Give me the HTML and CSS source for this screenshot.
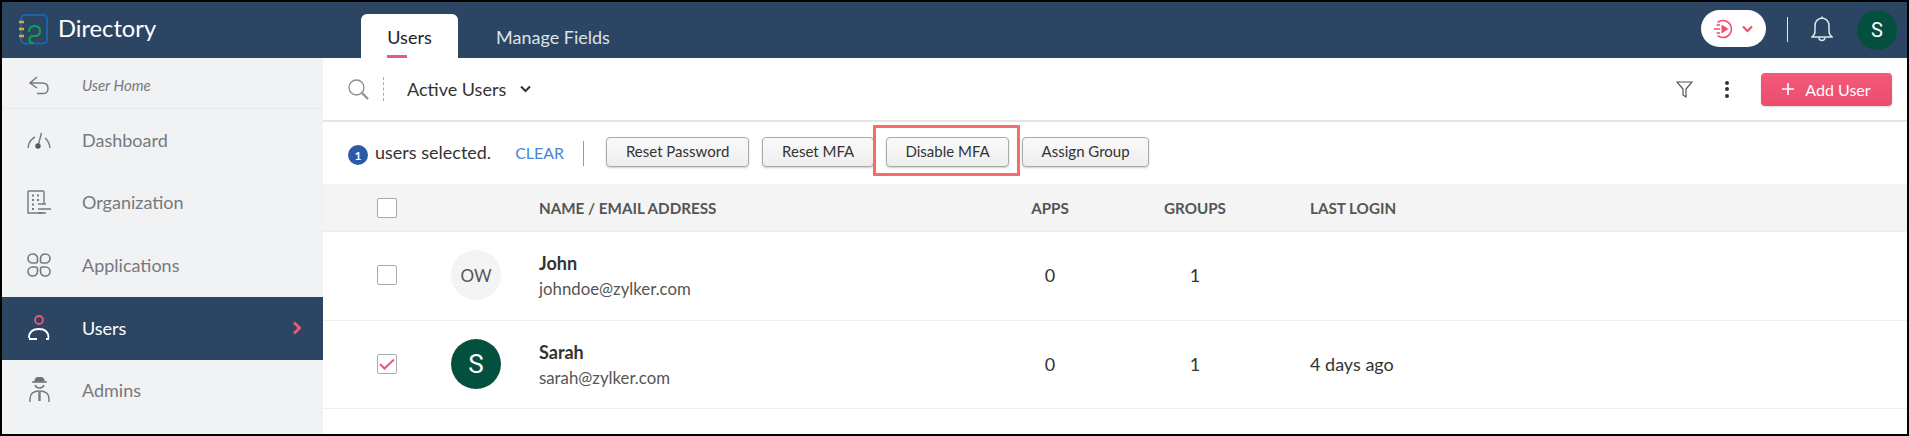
FILE: index.html
```html
<!DOCTYPE html>
<html lang="en">
<head>
  <meta charset="UTF-8" />
  <title>Directory</title>
  <link rel="stylesheet" href="styles.css">
</head>
<body>
  <div class="frame">
    <div class="navbar">
      <div class="brand">
        <svg class="brand-logo" width="29" height="32" viewBox="0 0 29 32" fill="none">
          <rect x="2" y="2" width="26" height="28.500" rx="4" stroke="#1f64a8" stroke-width="2"/>
          <path d="M0 9h5M0 16h5M0 23h5" stroke="#e0a82e" stroke-width="2.400"/>
          <path d="M10 19q0-6 5.500-6t5.500 5q0 5-5 5h-2q-3.500 0-3.500 3.500t4 3.500" stroke="#12a150" stroke-width="2"/>
        </svg>
        <span class="brand-name">Directory</span>
      </div>
      <div class="tabs">
        <div class="tab active">Users</div>
        <div class="tab">Manage Fields</div>
      </div>
      <div class="nav-right">
        <div class="whats-new">
          <svg width="19" height="20" viewBox="0 0 19 20" fill="none" stroke="#ef4f6f" stroke-width="1.600">
            <path d="M3.500 3.500a8.500 8.500 0 1 1 0 13"/>
            <path d="M7.500 5.500v9l7-4.500z" fill="#ef4f6f" stroke="none"/>
            <path d="M2.500 6h3.500M0 10h6M2.500 14h3.500"/>
          </svg>
          <svg width="11" height="8" viewBox="0 0 11 8" fill="none" stroke="#ef4f6f" stroke-width="2.200"><path d="M1 1.500l4.500 4.500 4.500-4.500"/></svg>
        </div>
        <div class="nav-sep"></div>
        <svg class="bell" width="22" height="27" viewBox="0 0 22 27" fill="none" stroke="#dfe6ee" stroke-width="1.500">
          <path d="M1 21q3-2 3-6v-5q0-7 7-8 7 1 7 8v5q0 4 3 6z"/>
          <path d="M8 21.500a3 3 0 0 0 6 0"/>
          <path d="M11 0.500v2"/>
        </svg>
        <div class="avatar avatar-small">S</div>
      </div>
    </div>

    <div class="content">
      <div class="sidebar">
        <div class="side-item home">
          <svg width="22" height="22" viewBox="0 0 22 22" fill="none" stroke="#77797d" stroke-width="1.500"><path d="M9 5L2 11l7 5M2 11h12q6 0 6 5.500t-6 5h-5" transform="translate(0 -2)"/></svg>
          <span>User Home</span>
        </div>
        <div class="side-item">
          <svg width="24" height="18" viewBox="0 0 24 18" fill="none" stroke="#77797d" stroke-width="1.400"><path d="M1 17q1-8 7-11M18 7q4 3 5 10"/><path d="M11.500 13l3-11"/><circle cx="11" cy="15" r="2.700" fill="#55585c" stroke="none"/></svg>
          <span>Dashboard</span>
        </div>
        <div class="side-item">
          <svg width="24" height="24" viewBox="0 0 24 24" fill="none" stroke="#77797d" stroke-width="1.400"><path d="M16 23H1V2q0-1 1-1h14q1 0 1 1v12"/><path d="M5 5.500h2M10 5.500h2M5 10h2M10 10h2M5 14.500h2M5 19h2" stroke-width="2"/><path d="M11 14h8M11 19h13M11 23h8" stroke-width="1.500"/></svg>
          <span>Organization</span>
        </div>
        <div class="side-item">
          <svg width="24" height="24" viewBox="0 0 24 24" fill="none" stroke="#77797d" stroke-width="1.600">
            <path id="petal" d="M5.500 1a4.500 4.500 0 0 0 0 9h3a2 2 0 0 0 2-2V5.500A4.500 4.500 0 0 0 5.500 1z"/>
            <use href="#petal" transform="matrix(-1 0 0 1 24 0)"/>
            <use href="#petal" transform="matrix(1 0 0 -1 0 24)"/>
            <use href="#petal" transform="matrix(-1 0 0 -1 24 24)"/>
          </svg>
          <span>Applications</span>
        </div>
        <div class="side-item active">
          <svg width="24" height="26" viewBox="0 0 24 26" fill="none" stroke-width="1.800"><circle cx="12" cy="5" r="4" stroke="#f0567a"/><path d="M2 23q0-9 10-9 9.500 0 9.500 9" stroke="#fff"/><path d="M2 24h8M19 24h3" stroke="#fff"/></svg>
          <span>Users</span>
          <svg class="side-arrow" width="11" height="14" viewBox="0 0 11 14" fill="none" stroke="#f0567a" stroke-width="3"><path d="M2 1.500l5.500 5.500-5.500 5.500"/></svg>
        </div>
        <div class="side-item">
          <svg width="22" height="26" viewBox="0 0 22 26" fill="none" stroke="#77797d" stroke-width="1.500"><path d="M7 4.500q0-4 4.500-4t4.500 4z" fill="#6a6c70"/><path d="M4 5h15"/><path d="M7 8q1 3 4.500 3t4.500-3"/><path d="M2 25v-3q0-8 9.500-8 9.500 0 9.500 8v3"/><path d="M11.500 15v9" stroke-width="2.400"/></svg>
          <span>Admins</span>
        </div>
      </div>

      <div class="main">
        <div class="toolbar">
          <svg class="search-icon" width="21" height="21" viewBox="0 0 21 21" fill="none" stroke="#8b8f94" stroke-width="1.300"><circle cx="8.500" cy="8.500" r="7.500"/><path d="M14 14l6 6" stroke-width="2.200"/></svg>
          <div class="dash-sep"></div>
          <div class="view-select">Active Users</div>
          <svg width="11" height="8" viewBox="0 0 11 8" fill="none" stroke="#333" stroke-width="2"><path d="M1 1.500l4.500 4.500 4.500-4.500"/></svg>
          <div class="toolbar-right">
            <svg width="17" height="17" viewBox="0 0 17 17" fill="none" stroke="#55585c" stroke-width="1.200"><path d="M1 1h15l-6 7v8l-3-2V8z"/></svg>
            <div class="dots"><i></i><i></i><i></i></div>
            <button class="add-user-btn">
              <svg width="12" height="12" viewBox="0 0 12 12" fill="none" stroke="#fff" stroke-width="1.600"><path d="M6 0v12M0 6h12"/></svg>
              Add User
            </button>
          </div>
        </div>

        <div class="action-bar">
          <div class="count">1</div>
          <span class="selected">users selected.</span>
          <span class="clear">CLEAR</span>
          <div class="action-sep"></div>
          <button class="action-btn reset-pass">Reset Password</button>
          <button class="action-btn reset-mfa">Reset MFA</button>
          <button class="action-btn disable-mfa">Disable MFA</button>
          <button class="action-btn assign">Assign Group</button>
        </div>

        <div class="table-row table-head">
          <div class="cell-check"><div class="check"></div></div>
          <div></div>
          <div>NAME / EMAIL ADDRESS</div>
          <div class="cell-num">APPS</div>
          <div class="cell-num">GROUPS</div>
          <div class="cell-last">LAST LOGIN</div>
        </div>

        <div class="table-row user-row">
          <div class="cell-check"><div class="check"></div></div>
          <div><div class="avatar avatar-light">OW</div></div>
          <div class="cell-user">
            <div class="user-name">John</div>
            <div class="user-email">johndoe@zylker.com</div>
          </div>
          <div class="cell-num">0</div>
          <div class="cell-num">1</div>
          <div class="cell-last"></div>
        </div>

        <div class="table-row user-row">
          <div class="cell-check">
            <div class="check">
              <svg width="16" height="12" viewBox="0 0 16 12" fill="none" stroke="#f0567a" stroke-width="2"><path d="M1 6l4.500 4.500L15 1.500"/></svg>
            </div>
          </div>
          <div><div class="avatar avatar-dark">S</div></div>
          <div class="cell-user">
            <div class="user-name">Sarah</div>
            <div class="user-email">sarah@zylker.com</div>
          </div>
          <div class="cell-num">0</div>
          <div class="cell-num">1</div>
          <div class="cell-last">4 days ago</div>
        </div>
      </div>
    </div>
  </div>
</body>
</html>
```

FILE: styles.css
```css
* {
  box-sizing: border-box;
}
html, body {
  margin: 0;
  padding: 0;
}
body {
  width: 1909px;
  height: 436px;
  overflow: hidden;
  font-family: Lato, "Open Sans", sans-serif;
  color: #333;
  background: #fff;
}
.frame {
  height: 436px;
  border: 2px solid #000;
  display: flex;
  flex-direction: column;
}
.navbar {
  height: 56px;
  flex: none;
  background-color: #2c4563;
  display: flex;
  align-items: flex-end;
}
.brand {
  width: 359px;
  height: 56px;
  padding-left: 17px;
  display: flex;
  align-items: center;
  gap: 10px;
  flex: none;
}
.brand-logo {
  margin-top: -3px;
}
.brand-name {
  color: #fff;
  font-size: 23.700px;
  margin-top: -4px;
}
.tabs {
  display: flex;
  height: 44px;
}
.tab {
  color: #dde3ea;
  font-size: 18px;
  width: 97px;
  text-align: center;
  padding-top: 12px;
  border-radius: 6px 6px 0 0;
  position: relative;
}
.tab + .tab {
  width: 190px;
}
.tab.active {
  background: #fff;
  color: #222;
}
.tab.active::after {
  content: "";
  position: absolute;
  left: 26px;
  bottom: 0;
  width: 20px;
  height: 3px;
  background: #f0567a;
}
.nav-right {
  margin-left: auto;
  height: 56px;
  display: flex;
  align-items: center;
  padding-right: 10px;
}
.whats-new {
  width: 65px;
  height: 37px;
  margin-top: -3px;
  padding-left: 13px;
  background: #fff;
  border-radius: 19px;
  display: flex;
  align-items: center;
  gap: 9px;
}
.nav-sep {
  width: 1px;
  height: 25px;
  background: #dfe6ee;
  margin: -1px 23px 0 21px;
}
.bell {
  margin-right: 24px;
  margin-top: -2px;
}
.avatar {
  border-radius: 50%;
  display: flex;
  align-items: center;
  justify-content: center;
  font-family: Roboto, Lato, sans-serif;
}
.avatar-small {
  width: 40px;
  height: 40px;
  background: #04503f;
  color: #fff;
  font-size: 20px;
}
.content {
  flex: 1;
  display: flex;
  min-height: 0;
}
.sidebar {
  width: 321px;
  flex: none;
  background: #f1f2f4;
}
.side-item {
  height: 62.670px;
  padding-bottom: 1px;
  display: flex;
  align-items: center;
  color: #77797d;
  font-size: 18px;
  padding-left: 25px;
  position: relative;
}
.side-item svg:first-child {
  width: 24px;
  margin-right: 31px;
}
.side-item.home {
  height: 51px;
  padding-top: 3px;
  padding-bottom: 0;
  font-size: 15px;
  font-style: italic;
  border-bottom: 1px solid #e8e9eb;
}
.side-item.active {
  background: #2c4563;
  color: #fff;
}
.side-arrow {
  position: absolute;
  right: 20px;
  top: 24px;
}
.main {
  flex: 1;
  min-width: 0;
}
.toolbar {
  height: 64px;
  border-bottom: 2px solid #e6e6e6;
  display: flex;
  align-items: center;
  padding-left: 25px;
  padding-right: 15px;
}
.dash-sep {
  height: 24px;
  border-left: 1px dashed #aaa;
  margin-left: 14px;
  margin-right: 23px;
}
.view-select {
  font-size: 18px;
  color: #333;
  margin-right: 14px;
}
.toolbar-right {
  margin-left: auto;
  display: flex;
  align-items: center;
}
.dots {
  display: flex;
  flex-direction: column;
  gap: 2.500px;
  margin-left: 32px;
  margin-right: 32px;
}
.dots i {
  width: 4px;
  height: 4px;
  border-radius: 50%;
  background: #2c3444;
}
.add-user-btn {
  width: 131px;
  height: 33px;
  border: none;
  border-radius: 4px;
  background: linear-gradient(#f55a7b, #ea4d6d);
  color: #fff;
  font-family: inherit;
  font-size: 16px;
  box-shadow: 0 1px 2px rgba(0,0,0,0.15);
  display: flex;
  align-items: center;
  justify-content: center;
  gap: 11px;
  padding: 0;
}
.action-bar {
  height: 62px;
  display: flex;
  align-items: center;
  padding-left: 25px;
}
.count {
  width: 20px;
  height: 20px;
  border-radius: 50%;
  background: #2a5ba8;
  color: #fff;
  font-size: 12px;
  font-weight: 700;
  text-align: center;
  line-height: 21px;
  margin-right: 7px;
  margin-top: 4px;
}
.selected {
  font-size: 18px;
  color: #333;
  margin-top: -2px;
}
.clear {
  font-size: 16px;
  color: #4a86d8;
  margin-left: 24px;
  margin-top: -1px;
}
.action-sep {
  width: 1px;
  height: 25px;
  background: #999;
  margin-left: 19px;
  margin-right: 22px;
}
.action-btn {
  height: 30px;
  margin-top: -2px;
  border: 1px solid #aaa;
  border-radius: 4px;
  background: linear-gradient(#fafafa, #eee);
  box-shadow: 0 1px 2px rgba(0,0,0,0.2);
  font-family: inherit;
  font-size: 15px;
  color: #333;
  padding: 0 0 2px;
}
.reset-pass {
  width: 143px;
  margin-right: 13px;
}
.reset-mfa {
  width: 112px;
  margin-right: 12px;
}
.disable-mfa {
  width: 123px;
  margin-right: 13px;
  position: relative;
}
/* red box drawn round the button */
.disable-mfa::after {
  content: "";
  box-sizing: border-box;
  position: absolute;
  left: -14px;
  top: -13px;
  width: 147px;
  height: 51px;
  border: 3px solid #f96a6a;
}
.assign {
  width: 127px;
}
.table-row {
  display: grid;
  grid-template-columns: 128px 88px 461px 100px 190px 1fr;
  align-items: center;
}
.table-head {
  height: 48px;
  background: #f4f4f4;
  border-bottom: 1px solid #ececec;
  font-size: 15.200px;
  font-weight: 700;
  color: #555;
}
.cell-check {
  padding-left: 54px;
}
.check {
  width: 20px;
  height: 20px;
  border: 1px solid #aaa;
  border-radius: 2px;
  background: #fff;
  display: flex;
  align-items: center;
  justify-content: center;
}
.cell-num {
  text-align: center;
}
.cell-last {
  padding-left: 20px;
}
.user-row {
  height: 88.500px;
  padding-bottom: 1.500px;
  border-bottom: 1px solid #efefef;
  font-size: 18px;
  color: #333;
}
.avatar-light {
  width: 50px;
  height: 50px;
  background: #f4f4f4;
  color: #555;
  font-size: 17px;
  font-family: Lato, sans-serif;
}
.avatar-dark {
  width: 50px;
  height: 50px;
  background: #04503f;
  color: #fff;
  font-size: 26px;
}
.cell-user {
  padding-top: 1px;
}
.user-name {
  font-size: 18px;
  font-weight: 700;
  color: #333;
  margin-bottom: 4px;
}
.user-email {
  font-size: 16.800px;
  color: #555;
}
```
